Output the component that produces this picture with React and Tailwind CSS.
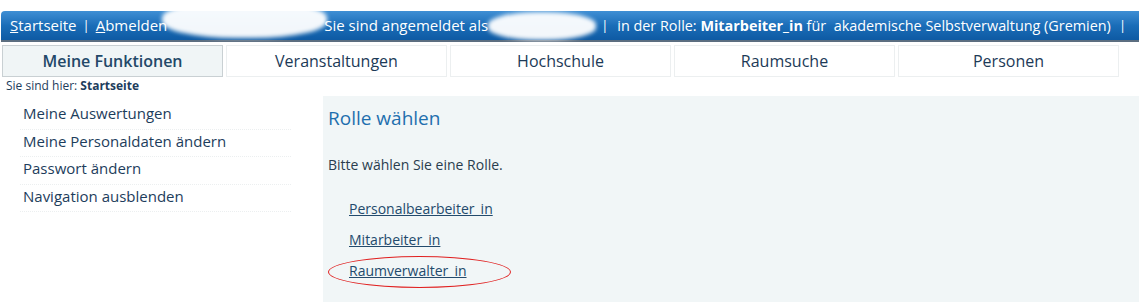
import React from 'react'

const tabs = ['Meine Funktionen', 'Veranstaltungen', 'Hochschule', 'Raumsuche', 'Personen']
const navItems = ['Meine Auswertungen', 'Meine Personaldaten ändern', 'Passwort ändern', 'Navigation ausblenden']
const roles = ['Personalbearbeiter_in', 'Mitarbeiter_in', 'Raumverwalter_in']

function Smudge({ className }) {
  // white scribble that hides the user name in the screenshot
  return (
    <div className={`absolute rounded-[45%] bg-white/95 blur-[2px] ${className}`} />
  )
}

export default function App() {
  return (
    <div className="w-[1139px] h-[302px] overflow-hidden bg-white font-['Open_Sans','Noto_Sans',sans-serif] text-[#1d3d5c]">
      <div className="relative pt-[11px]">
        <div className="h-[31px] ml-[1px] rounded-tl-[4px] bg-gradient-to-b from-[#3f8fd4] via-[#1a6db8] to-[#0e5aa3] border-b-2 border-[#5c6e80] flex items-center pl-[9px] text-[15px] text-white whitespace-nowrap">
          <span><span className="underline">S</span>tartseite</span>
          <span className="mx-[6px] text-[13px]">|</span>
          <span><span className="underline">A</span>bmelden</span>
          <span className="ml-[157px]">Sie sind angemeldet als</span>
          <span className="ml-[113px] text-[13px]">|</span>
          <span className="ml-[9px] text-[14.4px]">in der Rolle: <b className="font-bold">Mitarbeiter_in</b> für&nbsp; akademische Selbstverwaltung (Gremien)</span>
          <span className="ml-[8px] text-[13px]">|</span>
        </div>
        <Smudge className="left-[162px] top-[1px] w-[165px] h-[37px]" />
        <Smudge className="left-[488px] top-[12px] w-[108px] h-[28px]" />
      </div>

      <div className="flex gap-[3px] mt-[3px] pl-[2px]">
        {tabs.map((t, i) => (
          <div
            key={t}
            className={`w-[221px] h-[32px] flex items-center justify-center text-[16px] border text-[#1c3a57] ${
              i === 0 ? 'bg-[#f0f5f6] border-[#c9d0d3] font-semibold text-[#234868]' : 'bg-white border-[#eceff0]'
            }`}
          >
            {t}
          </div>
        ))}
      </div>

      <div className="pl-[6px] text-[12px] leading-[18px] text-[#1d3d5c]">
        Sie sind hier: <b className="font-bold">Startseite</b>
      </div>

      <div className="flex mt-[1px]">
        <div className="w-[323px] shrink-0 pl-[20px] pt-[6px]">
          {navItems.map((n) => (
            <div key={n} className="w-[271px] h-[27.5px] pl-[3px] pt-[1px] text-[15px] leading-[20px] border-b border-dotted border-[#eceff0]">
              {n}
            </div>
          ))}
        </div>
        <div className="flex-1 h-[206px] bg-[#f1f6f7] pl-[5px] pt-[10px]">
          <h1 className="text-[19px] leading-[24px] text-[#1e6fae]">Rolle wählen</h1>
          <p className="mt-[25px] text-[14px] leading-[20px] text-[#2a3d4e]">Bitte wählen Sie eine Rolle.</p>
          <div className="mt-[24px] pl-[21px] flex flex-col gap-[11px] text-[14px] leading-[20px]">
            {roles.map((r, i) => (
              <div key={r} className="relative w-fit">
                <span className="underline text-[#234a6c]">{r}</span>
                {i === 2 && (
                  <div className="absolute left-[-21px] top-[-5px] w-[183px] h-[32px] rounded-[50%] border border-[#e02020]" />
                )}
              </div>
            ))}
          </div>
        </div>
      </div>
    </div>
  )
}
